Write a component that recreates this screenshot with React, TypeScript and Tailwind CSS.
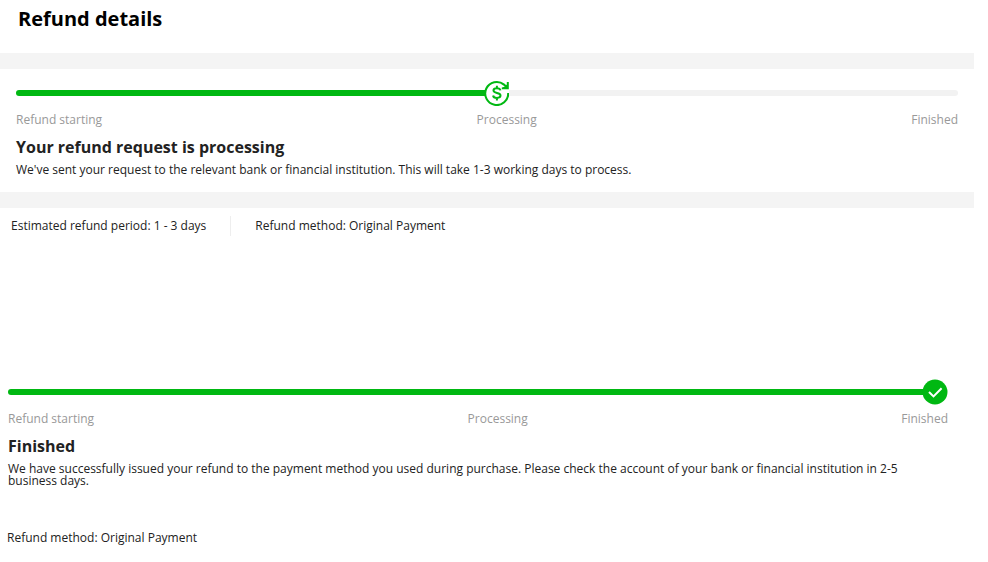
import { ReactNode } from "react";

interface ProgressTrackProps {
  percent: number;
  icon: ReactNode;
}

interface RefundStatusProps extends ProgressTrackProps {
  title: string;
  message: string;
}

const STEPS = ["Refund starting", "Processing", "Finished"];

function RefundIcon() {
  return (
    <svg viewBox="0 0 26 26" className="h-6.5 w-6.5" fill="none" stroke="#00b812" aria-hidden>
      <path d="M0 10H2.5V16H0Z" fill="#00b812" stroke="none" />
      <path d="M25.2 13A11.5 11.5 0 1 1 21 4.6L23 6.6" strokeWidth="2.1" />
      <path d="M25.8 2V9.2H18.8V7.4L21.6 6.8L23.8 4.6V2Z" fill="#00b812" stroke="none" />
      <path
        d="M17.4 10.4C17.1 9 15.8 8.3 13.9 8.3C11.9 8.3 10.5 9.1 10.5 10.6C10.5 12 11.7 12.5 13.9 13C16.2 13.5 17.5 14.1 17.5 15.6C17.5 17.1 16 17.9 13.9 17.9C11.8 17.9 10.3 17 10.1 15.5M13.9 5.8V8.3M13.9 17.9V20.4"
        strokeWidth="2"
      />
    </svg>
  );
}

function DoneIcon() {
  return (
    <svg viewBox="0 0 26 26" className="h-6.5 w-6.5" fill="none" aria-hidden>
      <path d="M0 10H4V16H0Z" fill="#00b812" />
      <circle cx="13" cy="13" r="12.5" fill="#00b812" />
      <path d="M7 13L11.5 17.4L19.6 9.2" stroke="#fff" strokeWidth="2" />
    </svg>
  );
}

function ProgressTrack({ percent, icon }: ProgressTrackProps) {
  return (
    <div className="flex h-6.5 items-center">
      <div className="h-1.5 rounded-l-full bg-[#00b812]" style={{ flexGrow: percent }} />
      <div className="shrink-0">{icon}</div>
      <div className="h-1.5 rounded-r-full bg-[#f2f2f2]" style={{ flexGrow: 100 - percent }} />
    </div>
  );
}

function RefundStatus({ percent, icon, title, message }: RefundStatusProps) {
  return (
    <>
      <ProgressTrack percent={percent} icon={icon} />
      <div className="mt-1 flex justify-between leading-5 text-[#999]">
        {STEPS.map((step) => (
          <span key={step}>{step}</span>
        ))}
      </div>
      <h2 className="mt-[7px] text-base leading-5 font-bold text-[#222]">{title}</h2>
      <p className="mt-[7px] pr-8 leading-3">{message}</p>
    </>
  );
}

export default function App() {
  return (
    <main className="bg-white pb-3 font-['Open_Sans',sans-serif] text-xs text-[#222]">
      <h1 className="px-4.5 pt-[5px] pb-5 text-xl leading-7 font-bold text-black">Refund details</h1>

      <div className="mr-3.5 border-y-16 border-[#f4f4f4] px-4 pt-[11px] pb-4">
        <RefundStatus
          percent={51}
          icon={<RefundIcon />}
          title="Your refund request is processing"
          message="We've sent your request to the relevant bank or financial institution. This will take 1-3 working days to process."
        />
      </div>

      <div className="flex px-[11px] pt-2 leading-5">
        <span className="border-r border-[#eee] pr-6">Estimated refund period: 1 - 3 days</span>
        <span className="pl-6">Refund method: Original Payment</span>
      </div>

      <div className="mt-[143px] mr-10 pl-2">
        <RefundStatus
          percent={100}
          icon={<DoneIcon />}
          title="Finished"
          message="We have successfully issued your refund to the payment method you used during purchase. Please check the account of your bank or financial institution in 2-5 business days."
        />
      </div>

      <p className="mt-[41px] px-[7px] leading-5">Refund method: Original Payment</p>
    </main>
  );
}
